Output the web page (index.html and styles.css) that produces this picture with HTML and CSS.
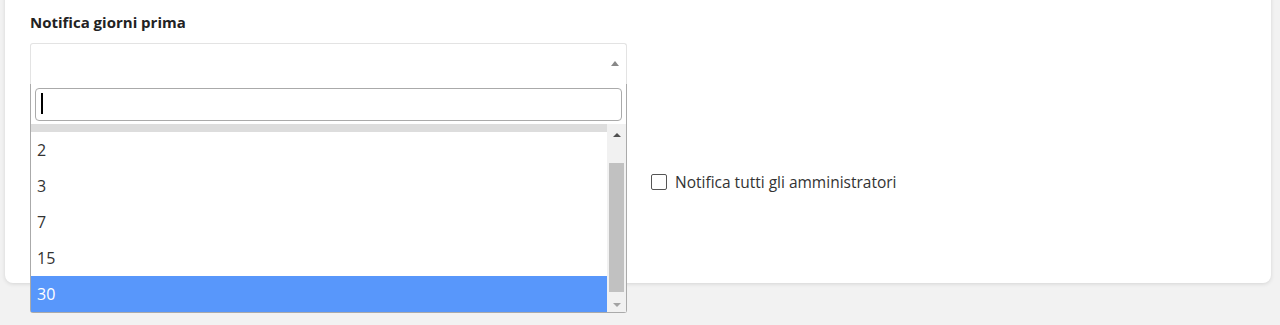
FILE: index.html
```html
<!DOCTYPE html>
<html lang="it">
<head>
<meta charset="utf-8">
<link rel="stylesheet" href="styles.css">
</head>
<body>
<div class="card">
  <div class="grid">
    <div class="field">
      <label class="label">Notifica giorni prima</label>
      <div class="select">
        <span class="arrow"></span>
        <div class="dropdown">
          <div class="search"><span class="caret"></span></div>
          <div class="results">
            <div class="options">
              <div class="scroller">
                <div class="opt grey">1</div>
                <div class="opt">2</div>
                <div class="opt">3</div>
                <div class="opt">7</div>
                <div class="opt">15</div>
                <div class="opt active">30</div>
              </div>
            </div>
            <div class="sbar">
              <div class="sbtn"><span class="tri up"></span></div>
              <div class="strack"><div class="thumb"></div></div>
              <div class="sbtn"><span class="tri down"></span></div>
            </div>
          </div>
        </div>
      </div>
    </div>
    <div class="side">
      <label class="check"><span class="box"></span>Notifica tutti gli amministratori</label>
    </div>
  </div>
</div>
</body>
</html>
```
FILE: styles.css
```css
* { box-sizing: border-box; }
html, body { margin: 0; }
body {
  background: #f2f2f2;
  font-family: "Open Sans", "Noto Sans", sans-serif;
  color: #333;
  width: 1280px;
  height: 325px;
  overflow: hidden;
}
.card {
  background: #fff;
  margin: -10px 9px 0 5px;
  height: 293px;
  border-radius: 8px;
  box-shadow: 0 1px 4px rgba(0,0,0,0.12);
  padding: 22px 25px 0 25px;
}
.grid {
  display: grid;
  grid-template-columns: 597px 1fr;
  column-gap: 24px;
}
.label {
  display: block;
  font-weight: 700;
  font-size: 15px;
  color: #222;
  line-height: 20px;
  margin-bottom: 11px;
}
.select {
  position: relative;
  height: 42px;
  border: 1px solid #e3e3e3;
  border-radius: 3px 3px 0 0;
  border-bottom-color: #e8e8e8;
}
.arrow {
  position: absolute;
  right: 7px;
  top: 17px;
  width: 0; height: 0;
  border-left: 4px solid transparent;
  border-right: 4px solid transparent;
  border-bottom: 5px solid #888;
}
.dropdown {
  position: absolute;
  left: -1px;
  right: -1px;
  top: 40px;
  background: #fff;
  border: 1px solid #aaa;
  border-top: none;
  border-radius: 0 0 3px 3px;
  z-index: 5;
}
.search {
  margin: 4px 4px 0 4px;
  height: 33px;
  border: 1px solid #aaa;
  border-radius: 4px;
  position: relative;
  padding: 4px;
}
.caret {
  display: block;
  width: 2px;
  height: 21px;
  background: #000;
  margin-left: 1px;
}
.results {
  display: flex;
  margin-top: 3px;
  height: 188px;
}
.options {
  flex: 1;
  overflow: hidden;
}
.scroller { margin-top: -28px; }
.opt {
  height: 36px;
  line-height: 36px;
  padding-left: 6px;
  font-size: 16px;
  color: #333;
}
.opt.grey { background: #ddd; color: #ddd; }
.opt.active { background: #5897fb; color: #fff; }
.sbar {
  width: 19px;
  background: #f1f1f1;
  display: flex;
  flex-direction: column;
}
.sbtn {
  height: 17px;
  display: flex;
  align-items: center;
  justify-content: center;
}
.tri { width: 0; height: 0; border-left: 4px solid transparent; border-right: 4px solid transparent; }
.tri.up { border-bottom: 4px solid #505050; margin-top: 4px; }
.tri.down { border-top: 4px solid #a3a3a3; margin-top: 2px; }
.strack { flex: 1; padding: 22px 2px 3px 2px; }
.thumb { height: 100%; background: #c1c1c1; }
.side { padding-top: 160px; }
.check {
  display: flex;
  align-items: center;
  font-size: 15.5px;
  color: #333;
  line-height: 20px;
}
.box {
  width: 16px;
  height: 16px;
  border: 1px solid #555;
  border-radius: 2px;
  margin-right: 8px;
}
```
